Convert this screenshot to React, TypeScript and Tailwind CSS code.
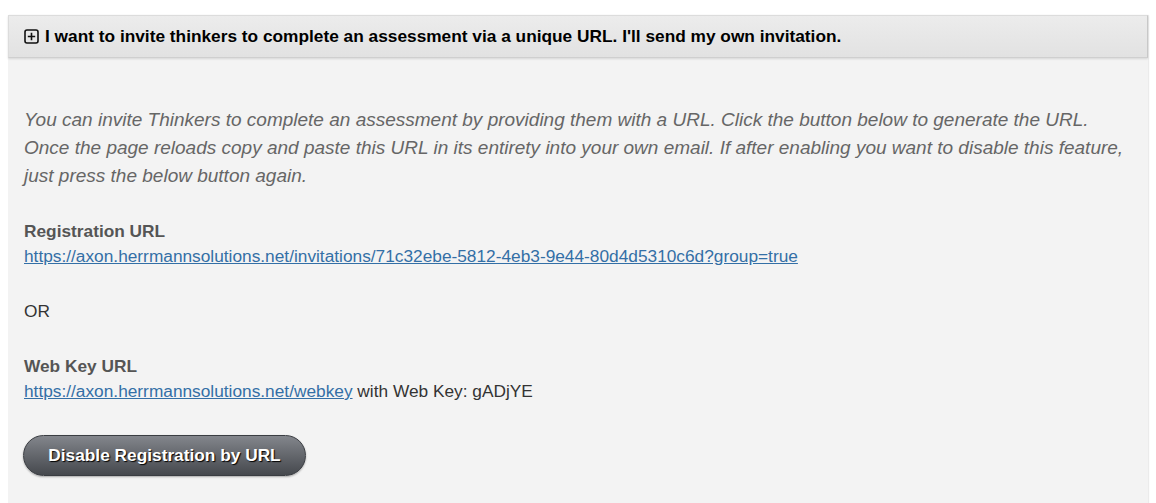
export default function App() {
  return (
    <div className="min-h-[503px] bg-white pt-[15px] px-2 font-['Liberation_Sans',Arial,sans-serif]">
      <div className="w-[1140px] bg-[#f3f3f3] min-h-[488px] shadow-[1px_0_1px_rgba(0,0,0,0.08)]">
        <div className="h-[43px] flex items-center pl-[15px] bg-gradient-to-b from-[#ececec] to-[#e2e2e2] border border-[#dcdcdc] border-b-[#cfcfcf] border-r-[#c8c8c8] shadow-[0_1px_2px_rgba(0,0,0,0.12)]">
          <svg width="15" height="15" viewBox="0 0 15 15" className="mr-[6px] shrink-0">
            <rect x="1" y="1" width="13" height="13" rx="2" fill="none" stroke="#111" strokeWidth="1.6" />
            <path d="M7.5 3.8v7.4M3.8 7.5h7.4" stroke="#111" strokeWidth="1.6" />
          </svg>
          <span className="text-[17.3px] font-bold text-black">
            I want to invite thinkers to complete an assessment via a unique URL. I'll send my own invitation.
          </span>
        </div>
        <div className="px-4 pt-[48px] pb-6">
          <p className="italic text-[19px] leading-[28px] text-[#666]">
            You can invite Thinkers to complete an assessment by providing them with a URL. Click the button below to generate the URL. Once the page reloads copy and paste this URL in its entirety into your own email. If after enabling you want to disable this feature, just press the below button again.
          </p>
          <div className="mt-[29px] text-[17.3px] leading-[25px] text-[#333]">
            <div className="font-bold text-[#555]">Registration URL</div>
            <a href="#" className="text-[#336fa6] underline">
              https://axon.herrmannsolutions.net/invitations/71c32ebe-5812-4eb3-9e44-80d4d5310c6d?group=true
            </a>
            <div className="mt-[30px]">OR</div>
            <div className="mt-[30px] font-bold text-[#555]">Web Key URL</div>
            <div>
              <a href="#" className="text-[#336fa6] underline">
                https://axon.herrmannsolutions.net/webkey
              </a>{' '}
              with Web Key: gADjYE
            </div>
          </div>
          <button className="mt-[31px] -ml-[1px] h-[41px] w-[283px] rounded-full border border-[#3a3d42] bg-gradient-to-b from-[#83868c] to-[#46494e] text-white font-bold text-[17.3px] [text-shadow:1px_1px_1px_#000] shadow-[0_1px_2px_rgba(0,0,0,0.3)]">
            Disable Registration by URL
          </button>
        </div>
      </div>
    </div>
  );
}
